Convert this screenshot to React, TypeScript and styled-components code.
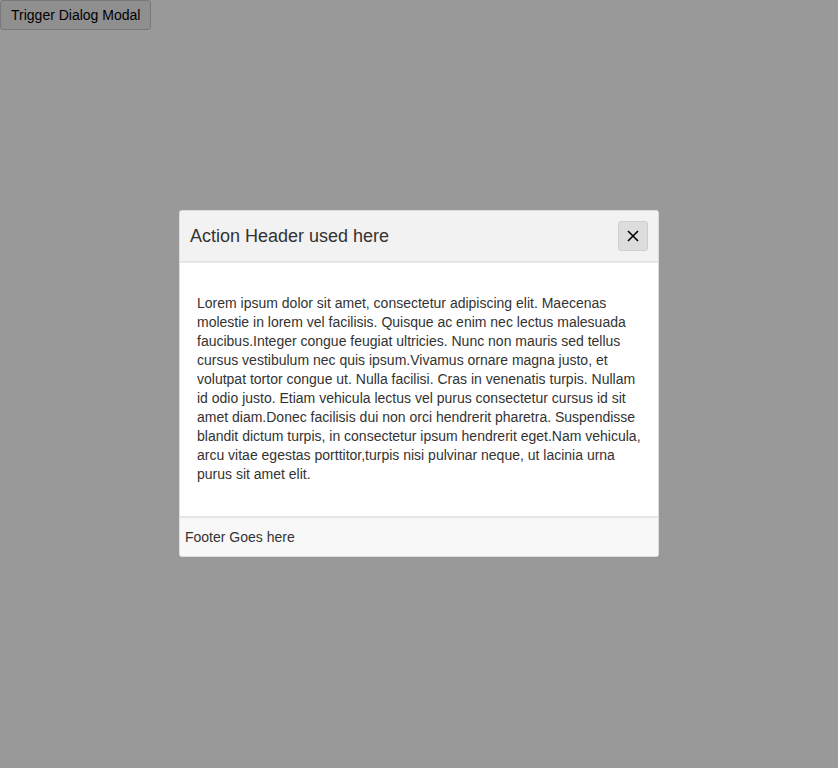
import React from "react";
import styled, { createGlobalStyle } from "styled-components";

const Global = createGlobalStyle`
  html, body { margin: 0; padding: 0; background: #fff; }
  body { font-family: "Liberation Sans", Arial, sans-serif; }
`;

const Trigger = styled.button`
  font-family: "Liberation Sans", Arial, sans-serif;
  font-size: 14px;
  padding: 6px 10px;
  height: 30px;
  background: #efefef;
  color: #000;
  border: 1px solid #c8c8c8;
  border-radius: 3px;
  margin: 0;
`;

const Overlay = styled.div`
  position: fixed;
  inset: 0;
  background: rgba(0, 0, 0, 0.4);
  display: flex;
  align-items: center;
  justify-content: center;
`;

const Dialog = styled.div`
  width: 480px;
  box-sizing: border-box;
  background: #fff;
  border: 1px solid #dcdcdc;
  border-radius: 3px;
  overflow: hidden;
  color: #333;
  margin-bottom: 1px;
`;

const Header = styled.div`
  display: flex;
  align-items: center;
  justify-content: space-between;
  height: 50px;
  padding: 0 10px;
  background: #f2f2f2;
  border-bottom: 2px solid #e6e6e6;
`;

const Title = styled.h2`
  margin: 0;
  font-size: 18px;
  font-weight: normal;
  color: #333;
`;

const Close = styled.button`
  width: 30px;
  height: 30px;
  padding: 0;
  display: flex;
  align-items: center;
  justify-content: center;
  background: #dddddd;
  border: 1px solid #cfcfcf;
  border-radius: 3px;
`;

const Body = styled.div`
  padding: 17px 17px 18px;
  font-size: 14px;
  line-height: 19px;
  color: #333;
`;

const Para = styled.p`
  margin: 14px 0;
`;

const Footer = styled.div`
  height: 38px;
  display: flex;
  align-items: center;
  padding: 0 5px;
  background: #f8f8f8;
  border-top: 2px solid #e6e6e6;
  font-size: 14px;
  color: #333;
`;

export default function App() {
  return (
    <>
      <Global />
      <Trigger>Trigger Dialog Modal</Trigger>
      <Overlay>
        <Dialog role="dialog">
          <Header>
            <Title>Action Header used here</Title>
            <Close aria-label="Close">
              <svg width="12" height="12" viewBox="0 0 12 12">
                <path d="M1 1L11 11M11 1L1 11" stroke="#000" strokeWidth="1.6" />
              </svg>
            </Close>
          </Header>
          <Body>
            <Para>
              Lorem ipsum dolor sit amet, consectetur adipiscing elit. Maecenas molestie in lorem vel facilisis. Quisque ac enim nec lectus malesuada faucibus.Integer congue feugiat ultricies. Nunc non mauris sed tellus cursus vestibulum nec quis ipsum.Vivamus ornare magna justo, et volutpat tortor congue ut. Nulla facilisi. Cras in venenatis turpis. Nullam id odio justo. Etiam vehicula lectus vel purus consectetur cursus id sit amet diam.Donec facilisis dui non orci hendrerit pharetra. Suspendisse blandit dictum turpis, in consectetur ipsum hendrerit eget.Nam vehicula, arcu vitae egestas porttitor,turpis nisi pulvinar neque, ut lacinia urna purus sit amet elit.
            </Para>
          </Body>
          <Footer>Footer Goes here</Footer>
        </Dialog>
      </Overlay>
    </>
  );
}
